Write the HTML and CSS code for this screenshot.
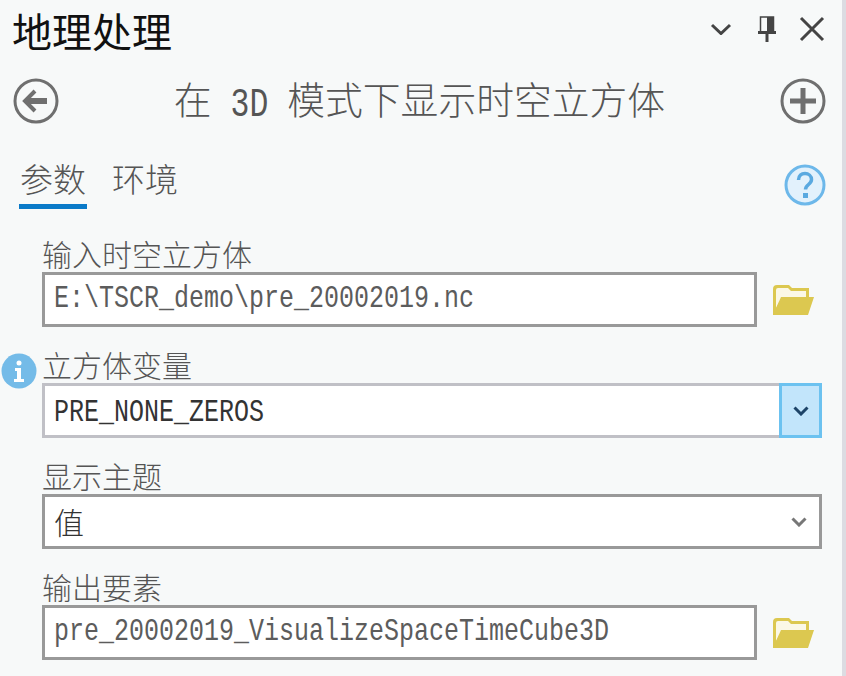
FILE: index.html
```html
<!DOCTYPE html>
<html lang="zh">
  <head>
    <meta charset="utf-8"/>
    <title>地理处理</title>
    <link rel="stylesheet" href="styles.css">
  </head>
  <body>
    <div class="panel">
      <div class="header">
        <div class="header-title">地理处理</div>
        <div class="header-icons">
          <svg class="chevron" width="22" height="12" viewBox="0 0 22 12"><path d="M2 2l9 8.500 9-8.500" class="icon-line"/></svg>
          <svg width="20" height="26" viewBox="0 0 20 26"><path d="M3.500 1h13v15h-13z" fill="none" stroke="#444" stroke-width="1.500"/><path d="M10 1h6.500v15H10z" fill="#444"/><path d="M1 16.500h18" class="icon-line"/><path d="M10 16v10" class="icon-line"/></svg>
          <svg width="26" height="26" viewBox="0 0 26 26"><path d="M2 2l22 22M24 2L2 24" class="icon-line"/></svg>
        </div>
      </div>

      <div class="toolbar">
        <svg width="46" height="46" viewBox="0 0 46 46"><circle cx="23" cy="23" r="21" class="circle-btn"/><path d="M34 23H13" class="arrow-line" stroke-width="6"/><path d="M22 13L12 23l10 10" class="arrow-line" stroke-width="4"/></svg>
        <div class="tool-name">在<span class="latin"> 3D </span>模式下显示时空立方体</div>
        <svg width="46" height="46" viewBox="0 0 46 46"><circle cx="23" cy="23" r="21" class="circle-btn"/><path d="M10 23h26M23 10v26" class="arrow-line" stroke-width="5"/></svg>
      </div>

      <div class="tabs">
        <div class="tab active">参数</div>
        <div class="tab">环境</div>
        <svg class="help" width="42" height="42" viewBox="0 0 42 42"><circle cx="21" cy="21" r="19" fill="#e2f1fc" stroke="#6db8ea" stroke-width="3"/><path d="M14.500 16c0-4.500 3-6.500 6.500-6.500s6.500 2.500 6.500 6c0 5-6 5-6 10" fill="none" stroke="#5aa9e0" stroke-width="3.500"/><rect x="19" y="29" width="5" height="5" fill="#5aa9e0"/></svg>
      </div>

      <div class="form">
        <div class="field">
          <div class="label">输入时空立方体</div>
          <div class="row">
            <div class="box text-box"><span class="mono">E:\TSCR_demo\pre_20002019.nc</span></div>
            <svg class="folder" width="41" height="31" viewBox="0 0 41 31"><path d="M0 31V5q0-4 4-4h12l3 3h17v9h-3v18H0z" fill="#dcc850"/><path d="M3 24V6q0-2 2-2h10l3 3h15v6H9z" fill="#fbf8e6"/><path d="M8 13h33l-6 18H0z" fill="#dcc850"/></svg>
          </div>
        </div>

        <div class="field">
          <svg class="info" width="36" height="36" viewBox="0 0 36 36"><circle cx="18" cy="18" r="17.500" fill="#74bbe8"/><circle cx="18" cy="10" r="2.500" fill="#fff"/><path d="M14 15h6v11h3v3H13v-3h3v-8h-2z" fill="#fff"/></svg>
          <div class="label">立方体变量</div>
          <div class="box select-box pale">
            <div class="select-value"><span class="mono">PRE_NONE_ZEROS</span></div>
            <div class="select-btn hot"><svg width="16" height="10" viewBox="0 0 16 10"><path d="M1.500 1.500L8 8l6.500-6.500" fill="none" stroke="#1d4468" stroke-width="3"/></svg></div>
          </div>
        </div>

        <div class="field">
          <div class="label">显示主题</div>
          <div class="box select-box">
            <div class="select-value cjk">值</div>
            <div class="select-btn"><svg width="16" height="10" viewBox="0 0 16 10"><path d="M1.500 1.500L8 8l6.500-6.500" fill="none" stroke="#777" stroke-width="3"/></svg></div>
          </div>
        </div>

        <div class="field">
          <div class="label">输出要素</div>
          <div class="row">
            <div class="box text-box"><span class="mono">pre_20002019_VisualizeSpaceTimeCube3D</span></div>
            <svg class="folder" width="41" height="31" viewBox="0 0 41 31"><path d="M0 31V5q0-4 4-4h12l3 3h17v9h-3v18H0z" fill="#dcc850"/><path d="M3 24V6q0-2 2-2h10l3 3h15v6H9z" fill="#fbf8e6"/><path d="M8 13h33l-6 18H0z" fill="#dcc850"/></svg>
          </div>
        </div>
      </div>
    </div>
  </body>
</html>
```

FILE: styles.css
```css
html, body {
  margin: 0px;
  padding: 0px;
  overflow: hidden;
  background: #f7f9f9;
}

.panel {
  box-sizing: border-box;
  width: 846px;
  height: 676px;
  overflow: hidden;
  border-right: 4px solid #dcdce2;
  font-family: "Noto Sans CJK SC", sans-serif;
  color: #555;
}

svg {
  display: block;
  flex: none;
}

.header {
  display: flex;
  align-items: center;
  justify-content: space-between;
  height: 64px;
  padding: 0px 17px 0px 12px;
}

.header-title {
  font-size: 40px;
  line-height: 60px;
  height: 64px;
  color: #111;
}

.header-icons {
  display: flex;
  align-items: center;
  gap: 22px;
  margin-top: -6px;
}

.chevron {
  margin-right: 3px;
}

.icon-line {
  fill: none;
  stroke: #444;
  stroke-width: 3;
}

.toolbar {
  display: flex;
  align-items: center;
  justify-content: space-between;
  height: 46px;
  margin-top: 14px;
  padding: 0px 16px 0px 13px;
}

.tool-name {
  font-size: 37.800px;
  line-height: 40px;
  height: 46px;
  white-space: pre;
  font-weight: 300;
}

.latin {
  display: inline-block;
  font-family: "Liberation Mono", monospace;
  font-size: 0.833em;
  font-weight: 400;
  transform: scaleY(1.3);
}

.circle-btn {
  fill: none;
  stroke: #6f6f6f;
  stroke-width: 3;
}

.arrow-line {
  fill: none;
  stroke: #6f6f6f;
}

.tabs {
  display: flex;
  align-items: flex-end;
  height: 54px;
  margin-top: 31px;
  padding: 0px 16px 0px 19px;
}

.tab {
  box-sizing: border-box;
  height: 54px;
  width: 68px;
  font-size: 33px;
  line-height: 46px;
  text-align: center;
  font-weight: 300;
}

.tab.active {
  margin-right: 24px;
  border-bottom: 5px solid #0a7ac8;
}

.help {
  margin-left: auto;
  margin-bottom: 3px;
}

.form {
  margin-top: 29px;
  padding-left: 42px;
  padding-right: 20px;
}

.field {
  position: relative;
  margin-bottom: 22px;
}

.label {
  height: 34px;
  font-size: 30px;
  line-height: 30px;
  font-weight: 300;
}

.info {
  position: absolute;
  left: -41px;
  top: 4px;
}

.row {
  display: flex;
  align-items: center;
}

.box {
  box-sizing: border-box;
  height: 55px;
  background: white;
  border: 3px solid #999;
  font-family: "Liberation Mono", monospace;
  font-size: 25px;
  line-height: 48px;
  color: #5c5c5c;
}

.mono {
  display: inline-block;
  transform: scaleY(1.25);
}

.text-box {
  width: 715px;
  padding-left: 9px;
  white-space: nowrap;
  overflow: hidden;
}

.folder {
  margin-left: 16px;
}

.select-box {
  display: flex;
  width: 780px;
}

.select-box.pale {
  border-color: #c0c0c6;
}

.select-value {
  flex: 1;
  padding-left: 9px;
  padding-top: 3px;
  color: #333;
}

.select-value.cjk {
  padding-top: 0px;
  font-family: "Noto Sans CJK SC", sans-serif;
  font-size: 30px;
  font-weight: 300;
  color: #333;
}

.select-btn {
  display: flex;
  align-items: center;
  justify-content: center;
  box-sizing: border-box;
  width: 40px;
}

.select-btn.hot {
  width: 43px;
  height: 55px;
  margin: -3px -3px -3px 0px;
  background: #c2e5fb;
  border: 3px solid #6cc2f0;
}
```
